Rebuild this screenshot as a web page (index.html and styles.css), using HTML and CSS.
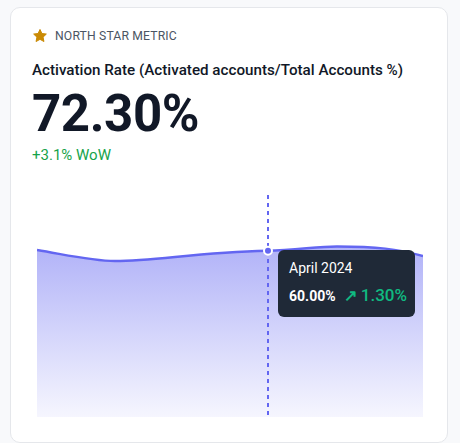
FILE: index.html
```html
<!DOCTYPE html>
<html>
<head>
<meta charset="utf-8">
<link rel="stylesheet" href="styles.css">
</head>
<body>
<div class="card">
  <div class="eyebrow">
    <svg class="star" viewBox="0 0 24 24" width="16" height="16"><path d="M12 2.2l2.9 6.1 6.6.8-4.9 4.6 1.3 6.6L12 17l-5.9 3.3 1.3-6.6-4.9-4.6 6.6-.8z" fill="#ca8a04" stroke="#ca8a04" stroke-width="1.5" stroke-linejoin="round"/></svg>
    <span>NORTH STAR METRIC</span>
  </div>
  <div class="title">Activation Rate (Activated accounts/Total Accounts %)</div>
  <div class="value">72.30%</div>
  <div class="delta">+3.1% WoW</div>
  <div class="chart">
    <svg width="386" height="222" viewBox="0 0 386 222">
      <defs>
        <linearGradient id="g" x1="0" y1="0" x2="0" y2="1">
          <stop offset="0" stop-color="#6366f1" stop-opacity="0.5"/>
          <stop offset="1" stop-color="#6366f1" stop-opacity="0.06"/>
        </linearGradient>
      </defs>
      <path d="M0,55 C30,60 55,66 78,66 C120,66 160,57 230,55.7 C260,55 280,51.5 300,51.5 C340,51.5 360,54 386,61 L386,222 L0,222 Z" fill="url(#g)"/>
      <path d="M0,55 C30,60 55,66 78,66 C120,66 160,57 230,55.7 C260,55 280,51.5 300,51.5 C340,51.5 360,54 386,61" fill="none" stroke="#6366f1" stroke-width="2.5"/>
      <line x1="231" y1="0" x2="231" y2="222" stroke="#6366f1" stroke-width="2" stroke-dasharray="4 4"/>
      <circle cx="231" cy="55.7" r="4" fill="#6366f1" stroke="#fff" stroke-width="2"/>
    </svg>
    <div class="tooltip">
      <div class="tt-date">April 2024</div>
      <div class="tt-row"><span class="tt-val">60.00%</span><span class="tt-chg"><span class="tt-arrow">↗</span> 1.30%</span></div>
    </div>
  </div>
</div>
</body>
</html>
```
FILE: styles.css
```css
html, body { margin: 0; padding: 0; }
body {
  background: #f8f9fb;
  font-family: Roboto, "Liberation Sans", sans-serif;
  width: 460px;
  height: 443px;
  overflow: hidden;
  padding: 7px 0 0 10px;
  box-sizing: border-box;
}
.card {
  width: 438px;
  height: 436px;
  box-sizing: border-box;
  background: #fff;
  border: 1px solid #e5e7eb;
  border-radius: 10px;
  padding: 20px 22px 0 21px;
  display: flex;
  flex-direction: column;
}
.eyebrow {
  display: flex;
  align-items: center;
  gap: 7px;
  height: 16px;
  font-size: 12.2px;
  color: #4b5563;
  letter-spacing: 0.15px;
}
.star { display: block; }
.title {
  margin-top: 16px;
  font-size: 15.2px;
  font-weight: 500;
  color: #111827;
  line-height: 20px;
}
.value {
  margin-top: 4px;
  font-size: 51px;
  font-weight: 700;
  color: #111827;
  line-height: 60px;
  letter-spacing: -0.4px;
}
.delta {
  margin-top: 1px;
  font-size: 15px;
  color: #16a34a;
  line-height: 20px;
}
.chart {
  position: relative;
  margin-top: 30px;
  margin-left: 5px;
  width: 386px;
  height: 222px;
}
.chart svg { display: block; }
.tooltip {
  position: absolute;
  left: 241px;
  top: 55px;
  width: 137px;
  height: 67px;
  box-sizing: border-box;
  background: #1f2937;
  border-radius: 6px;
  padding: 8px 11px;
  color: #fff;
  white-space: nowrap;
}
.tt-date { font-size: 14px; line-height: 20px; }
.tt-row { display: flex; align-items: baseline; gap: 8px; margin-top: 6px; line-height: 22px; }
.tt-val { font-size: 14px; font-weight: 700; }
.tt-chg { font-size: 17px; font-weight: 500; color: #10b981; }
.tt-arrow { font-size: 16px; font-weight: 700; }
```
